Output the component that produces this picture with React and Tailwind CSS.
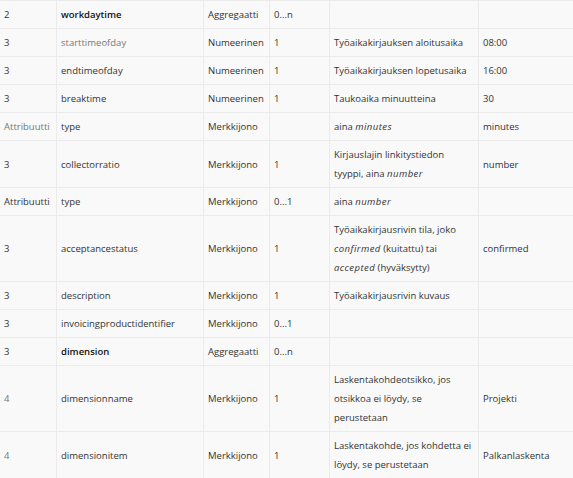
import React from "react";

const I = ({ children }) => <i className="tracking-[0.45px]">{children}</i>;

const rows = [
  { lvl: "2", name: "workdaytime", bold: true, type: "Aggregaatti", card: "0...n", desc: "", ex: "" },
  { lvl: "3", name: "starttimeofday", nameLight: true, type: "Numeerinen", card: "1", desc: "Työaikakirjauksen aloitusaika", ex: "08:00" },
  { lvl: "3", name: "endtimeofday", type: "Numeerinen", card: "1", desc: "Työaikakirjauksen lopetusaika", ex: "16:00" },
  { lvl: "3", name: "breaktime", type: "Numeerinen", card: "1", desc: "Taukoaika minuutteina", ex: "30" },
  { lvl: "Attribuutti", lvlLight: true, name: "type", type: "Merkkijono", card: "", desc: <>aina <I>minutes</I></>, ex: "minutes" },
  { lvl: "3", name: "collectorratio", type: "Merkkijono", card: "1", desc: <>Kirjauslajin linkitystiedon tyyppi, aina <I>number</I></>, ex: "number" },
  { lvl: "Attribuutti", name: "type", type: "Merkkijono", card: "0...1", desc: <>aina <I>number</I></>, ex: "" },
  { lvl: "3", name: "acceptancestatus", type: "Merkkijono", card: "1", desc: <>Työaikakirjausrivin tila, joko <I>confirmed</I> (kuitattu) tai <I>accepted</I> (hyväksytty)</>, ex: "confirmed" },
  { lvl: "3", name: "description", type: "Merkkijono", card: "1", desc: "Työaikakirjausrivin kuvaus", ex: "" },
  { lvl: "3", name: "invoicingproductidentifier", type: "Merkkijono", card: "0...1", desc: "", ex: "" },
  { lvl: "3", name: "dimension", bold: true, type: "Aggregaatti", card: "0...n", desc: "", ex: "" },
  { lvl: "4", lvlLight: true, name: "dimensionname", type: "Merkkijono", card: "1", desc: "Laskentakohdeotsikko, jos otsikkoa ei löydy, se perustetaan", ex: "Projekti" },
  { lvl: "4", lvlLight: true, name: "dimensionitem", type: "Merkkijono", card: "1", desc: "Laskentakohde, jos kohdetta ei löydy, se perustetaan", ex: "Palkanlaskenta" },
];

const td = "border-r border-b border-[#ebebeb] pl-[4px] pr-[4px] py-[4px] align-middle";

export default function App() {
  return (
    <div className="w-[573px] h-[478px] overflow-hidden bg-[#f9f9f9] font-['Open_Sans',sans-serif] text-[9.5px] leading-[19px] text-[#333]">
      <table className="table-fixed border-separate border-spacing-0 w-[620px] border-t border-[#ebebeb]">
        <colgroup>
          <col className="w-[57px]" />
          <col className="w-[147px]" />
          <col className="w-[66px]" />
          <col className="w-[60px]" />
          <col className="w-[149px]" />
          <col className="w-[141px]" />
        </colgroup>
        <tbody>
          {rows.map((r, i) => (
            <tr key={i}>
              <td className={`${td} ${r.lvlLight ? "text-[#777]" : ""}`}>{r.lvl}</td>
              <td className={`${td} ${r.bold ? "font-semibold text-[#111]" : ""} ${r.nameLight ? "text-[#777]" : ""}`}>{r.name}</td>
              <td className={td}>{r.type}</td>
              <td className={td}>{r.card}</td>
              <td className={td}>{r.desc}</td>
              <td className={td}>{r.ex}</td>
            </tr>
          ))}
        </tbody>
      </table>
    </div>
  );
}
